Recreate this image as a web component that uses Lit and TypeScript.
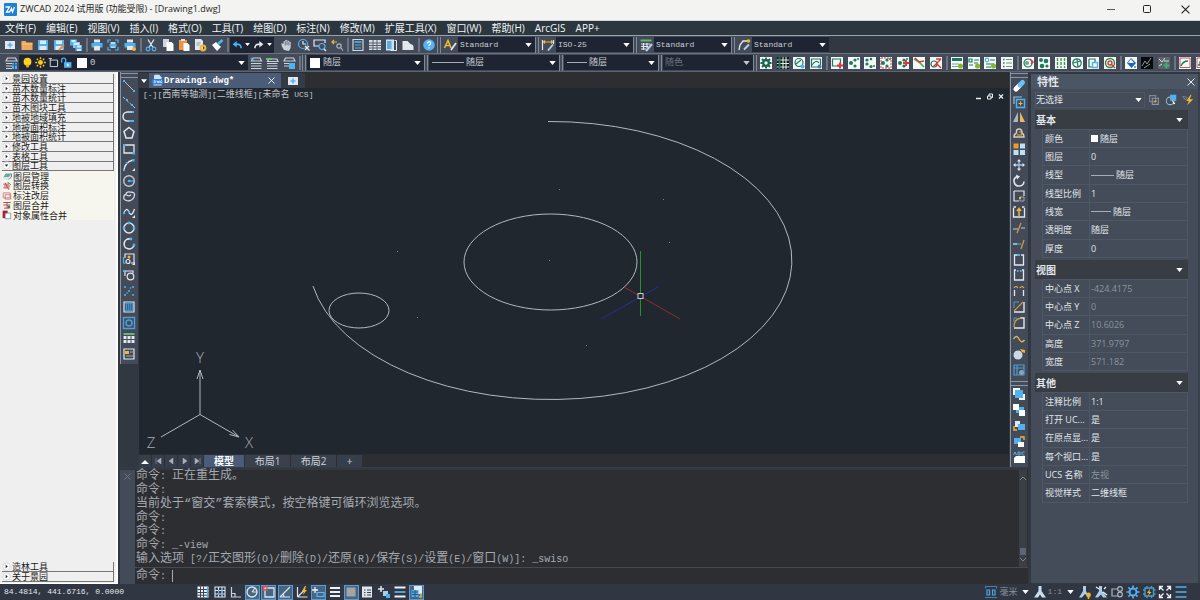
import { LitElement, html, css, svg, nothing, TemplateResult } from "lit";
import { customElement, state } from "lit/decorators.js";
import { classMap } from "lit/directives/class-map.js";

const W = "#e3e7ee";
const B = "#4fb3f2";
const Y = "#f2b632";
const G = "#1f7a5c";
const R = "#d83a3a";

/* ---------- drawing helpers for the 16x16 glyphs ---------- */
const ln = (d: string, c = W, w = 1.2) =>
  svg`<path d=${d} fill="none" stroke=${c} stroke-width=${w} />`;
const fl = (d: string, c = W) => svg`<path d=${d} fill=${c} />`;
const bx = (x: number, y: number, w: number, h: number, c = W) =>
  svg`<rect x=${x} y=${y} width=${w} height=${h} fill=${c} />`;
const dot = (x: number, y: number, r: number, c = B) =>
  svg`<circle cx=${x} cy=${y} r=${r} fill=${c} />`;
const ring = (x: number, y: number, r: number, c = W, w = 1.2) =>
  svg`<circle cx=${x} cy=${y} r=${r} fill="none" stroke=${c} stroke-width=${w} />`;
const tile = (inner: unknown, bg = "#f4f8f6") => svg`${bx(2, 2, 12, 12, bg)}${inner}`;
const tree = (c = G) => svg`${dot(5, 8, 2, c)}${dot(9, 5, 1.6, c)}${dot(9, 11, 1.6, c)}${dot(12, 4, 1, c)}`;
const plus = (x: number, y: number, c = R) => ln(`M${x - 3} ${y}h6M${x} ${y - 3}v6`, c, 2);

const ICONS: Record<string, unknown> = {
  newf: svg`${bx(3, 4, 10, 8)}${ln("M8 5.500v5M5.500 8h5", B, 1.6)}`,
  open: svg`${fl("M2.500 4h4l1 1.500h6V13h-11z", "#f0a95c")}${bx(2.5, 6.5, 11, 1, "#f7c489")}`,
  save: svg`${fl("M3 3h10v10H3z", B)}${bx(5, 3.5, 6, 3.5)}${bx(4.5, 9, 7, 4)}`,
  saveas: svg`${fl("M3 3h10v10H3z", B)}${bx(5, 3.5, 6, 3.5)}${bx(4.5, 9, 7, 4)}${ln("M8 13l5-5", "#f0863c", 2)}`,
  saveall: svg`${bx(2, 2.5, 7, 6, B)}${bx(3.5, 3, 4, 2)}${bx(5, 5, 7, 6, "#86c8f5")}${bx(6, 6, 5, 2)}${bx(7.5, 8, 6.5, 6, B)}${bx(9, 8.5, 4, 2)}${bx(9, 12, 4, 2)}`,
  print: svg`${bx(5, 2.5, 6, 3)}${bx(2.5, 6, 11, 4.5, B)}${bx(5, 9, 6, 4.5)}`,
  preview: svg`${ln("M3 6V3h3M10 3h3v3M13 10v3h-3M6 13H3v-3", B)}${bx(5.5, 5, 5, 6, "#bcd9ee")}${bx(4.5, 7, 7, 2.5, B)}`,
  plot: svg`${bx(5, 2.5, 6, 3)}${bx(2.5, 6, 11, 4.5, B)}${bx(5, 9, 6, 4)}${dot(12, 12, 2, Y)}`,
  cut: svg`${ln("M5 2.500l5 8M11 2.500l-5 8", W, 1.3)}${ring(5, 12, 1.8, B)}${ring(11, 12, 1.8, B)}`,
  copy: svg`${fl("M3 2h6v8H3z", "#cfd5de")}${fl("M6.500 5h5l2 2v7h-7z", "#fff")}`,
  paste: svg`${bx(3, 3, 8, 10, "#ea9547")}${bx(5, 2, 4, 2)}${fl("M7.500 6h4l2 2v6h-6z", "#fff")}`,
  match: svg`${fl("M3 2h6l2 2v9H3z")}${ln("M4.500 6h4M4.500 8h3", "#8893a3", 1)}${ring(11, 11, 2.4, Y, 2)}`,
  brush: svg`${fl("M3 8l4-3 5 5-4 4z", "#fff")}${ln("M9 7l4.500-4", B, 2.6)}`,
  undo: svg`${ln("M12.500 12q0-6-8-5", B, 2)}${fl("M2 7l5-4v8z", B)}`,
  redo: svg`${ln("M3.500 12q0-6 8-5", W, 2)}${fl("M14 7L9 3v8z")}`,
  hand: svg`${fl("M5 13q-3-4-2.500-7l2 1V4.500q1-1 1.800 0V3.200q1-1 1.800 0v.8q1-1 1.800 0v1q1-.8 1.800 0v5q0 2-2 4z", "#c9cfd8")}${ln("M6.300 4.500v4M8.100 4v4M9.900 5v3.500", "#434b59", .7)}`,
  zoomrt: svg`${ring(7, 7, 4.5, B)}${ln("M7 4v3h3", W)}${ln("M9 9l4.500 4.500", W, 1.3)}${ln("M9 13l4-4")}`,
  zoomw: svg`${ln("M13 6V3H2v6h5", W)}${ring(10, 9.5, 3, B)}${ln("M12 12l2 2", W, 1.5)}`,
  zoomp: svg`${ln("M3 5h5M5 3L3 5l2 2", Y)}${ring(10, 9, 2.2, "#aeb6c2")}${ln("M12 11l2 2.500", "#aeb6c2")}`,
  calc: svg`${ln("M3 2.500h10v11H3z", "#c9d8e6")}${ln("M4.500 5h7", B, 1.6)}${ln("M5 8h6M5 11h6", B)}`,
  sheet: svg`${bx(2, 3, 12, 10, "#d7dce4")}${ln("M2 6h12M2 8.500h12M2 11h12M6 3v10M10 3v10", "#56606f", 1)}`,
  pal: svg`${bx(3, 2.5, 8, 11, "#cfe2f1")}${bx(4, 4, 4.5, 8, "#59aee2")}${ln("M11.500 3.500h2v10h-6", W, 1)}`,
  cloud: svg`${fl("M2.500 4h5l3 3q3 .5 3 3v3h-11z")}`,
  help: svg`${dot(8, 8, 5.8, "#54b2f5")}${ln("M6.300 6.500q.2-1.800 1.800-1.800 1.700.1 1.600 1.600 0 1-1.600 1.800v.9M8 10.300v1.300", "#fff", 1.2)}`,
  txt: svg`${ln("M2.500 11L6 3.500 9 11M4 8.500h4", Y, 1.6)}${ln("M9 13l5-7", W, 1.8)}`,
  dim: svg`${ln("M2.500 3v10M13.500 3v4", W)}${ln("M3 5h10M5 3.500L3.500 5 5 6.500M11 3.500L12.500 5 11 6.500", Y)}${ln("M8 13.500l5-6", "#b9d2ea", 1.8)}`,
  tbl: svg`${bx(2.5, 2.5, 11, 2, "#67b477")}${ln("M3 7h9M3 9.500h7M3 12h5M5.500 6v7M9 6v5", W)}${ln("M8 14l6-7", "#b9d2ea", 2)}`,
  mld: svg`${ln("M3 13l1-5 3-4h5", W, 1.3)}${ln("M8 12.500l5-5", "#b9d2ea", 2)}${dot(12.5, 4, 1.8, Y)}`,
  layers: svg`${ln("M4.500 3h8l1.500 3H3zM3 8.500h6M3 11h6M3 13.500h6", "#cdd3dc")}${bx(9, 8, 5, 6, B)}${ln("M9 10h5M11.500 8v6", "#2a5d86", 1)}`,
  bulb: svg`${dot(8, 7, 4.8, "#ffd21f")}${bx(6.3, 10.5, 3.4, 3.5, "#e0b41c")}`,
  sun: svg`${dot(8, 8, 3, "#ffc81e")}${ln("M8 1.500v2.500M8 12v2.500M1.500 8H4M12 8h2.500M3.500 3.500l1.500 1.500M11 11l1.500 1.500M12.500 3.500L11 5M5 11l-1.500 1.500", "#ffc81e", 1.8)}`,
  vp: svg`${ln("M4 5h9v8H4zM2 3h4M4 3v3", "#cdd3dc")}`,
  lock: svg`${ln("M2 8V5q0-2.500 2.500-2.500T7 5v3", B, 1.6)}${bx(5, 7.5, 9, 7, B)}${bx(8.5, 9.5, 2, 3, "#fff")}`,
  lay1: svg`${ln("M5 3h7l1.500 3h-10zM3 8.500h10.500M3 11h10.500M3 13.500h10.500", "#cdd3dc")}${ln("M3 3l3 3", B, 1.5)}`,
  lay2: svg`${ln("M5 4h8l1 2.500H3.500zM3 8.500h10.500M3 11h10.500M3 13.500h10.500", "#cdd3dc")}${ln("M2 4h6", "#6fc46c", 1.8)}`,
  lay3: svg`${ln("M4.500 3h8l1.500 3H3zM3 8.500h6M3 11h6", "#cdd3dc")}${bx(8, 8, 6, 6, B)}`,
  gear: tile(svg`${ring(8, 8, 2.8, "#14634a", 2.2)}${ln("M8 2.500v2M8 11.500v2M2.500 8h2M11.500 8h2M4 4l1.500 1.500M10.500 10.500L12 12M12 4l-1.500 1.500M5.500 10.500L4 12", "#14634a", 1.8)}`),
  grid: svg`${bx(2, 2, 12, 12, "#0e1a18")}${ln("M2 5h12M2 8.500h12M2 12h12M8 2v12M11 2v12", "#dfe9e4", 1.1)}${ln("M4.500 2v12", G, 2)}`,
  g1: tile(svg`${ring(8, 7.5, 4, G)}${ln("M5 9l5-4", G)}${dot(11.5, 11.5, 2, B)}`),
  g2: tile(svg`${ln("M3.500 4h9v8h-9z", G)}${ln("M4 10q4-6 7-2", G)}${dot(11.5, 11.5, 2, "#3f83bb")}`),
  a1: tile(svg`${ln("M3.500 4h8v7h-8z", G)}${plus(11, 10.5)}`),
  a2: tile(tree()),
  a3: tile(svg`${dot(5, 5, 1.6, G)}${dot(5, 9, 1.6, G)}${dot(9, 11.5, 1.6, G)}${dot(12, 11, 1, G)}${dot(9, 4, 1.3, G)}`),
  a4: tile(svg`<rect x="3" y="3" width="10" height="10" fill="none" stroke=${R} stroke-dasharray="2 1" />${tree()}`),
  a5: tile(svg`${tree()}${plus(11, 8)}`),
  a6: tile(svg`${ln("M3 4l5 3 5 5", "#47b04a", 1.6)}${ln("M4 3l4 4 5-1", R, 1.6)}`),
  a7: tile(svg`${ring(6, 9, 3, G)}${ln("M8 4h5M5 12l8-8M9 9l4 4", R, 1.4)}`),
  t1: tile(svg`${bx(3, 3, 10, 3, G)}${ln("M3 9h7M3 11.500h6", "#7ba493", 1)}${dot(11.5, 11, 2.5, "#84b52c")}`),
  t2: tile(svg`${ln("M3 4h3v3H3zM8 5h5M8 8h4M3 10h4", G)}${dot(11.5, 11, 2.5, "#84b52c")}`),
  t3: tile(svg`${ring(5, 5, 1.8, B)}${ln("M8 5h5M4 9h8M4 12h5", G)}${dot(11.5, 11, 2.5, "#84b52c")}`),
  t4: tile(svg`${ln("M4 4.500h1.500M4 8h1.500M4 11.500h1.500", G, 1.5)}${ln("M7 4.500h6M7 8h6M7 11.500h6", "#6b9d8a", 1.2)}`),
  c1: tile(svg`${ring(8, 8, 4, G)}${dot(7, 8, 2, "#6aa58e")}${ln("M10 4l3 3-2 2", R, 1.5)}`),
  c2: tile(svg`${dot(5, 5, 2, G)}${dot(10, 6, 2.3, G)}${dot(6, 11, 2.3, G)}${dot(11, 11, 1.6, G)}`),
  c3: tile(svg`<path d="M4.500 3v10M8 3v10M11.500 3v10" stroke="#3f9b4c" stroke-width="1.4" stroke-dasharray="3 1" />`),
  c4: tile(svg`${ring(8, 8, 4.2, G)}${ln("M4 8l8-2M8 4l1 8", G)}`),
  c5: tile(svg`${ln("M4 4h6v3M4 4v8h3", G)}${ln("M7.500 7.500h5v5h-5z", B, 1.4)}`),
  c6: tile(svg`${ring(8, 8, 4.5, "#278a3f", 1.4)}${ring(8, 8, 2, R, 1.4)}${ln("M9 9l4 4", R, 1.5)}`),
  d1: tile(svg`${fl("M4 8l4-5 5 5-4.500 5z", "#1e65b5")}${fl("M5 8l3-4 3 4z", "#f6f6f6")}${bx(11, 11, 2, 2, B)}`),
  d2: svg`${bx(2, 2, 12, 12, "#07090b")}${ln("M3 11l3-5 2 3 4-6M5 13l6-4", "#8f989c", 1)}`,
  d3: svg`${bx(2, 2, 12, 12, "#5b6467")}${ln("M3 4l3 3 3-4M3 11l3-2M8 6h5", "#d8dedf", 1)}${plus(10.5, 10.5, "#3cae7a")}`,
  e1: tile(svg`${ln("M3 3h10v9.500H3z", "#bd4b4b", .9)}${ln("M4 11q2-5 7-5", G, 1.4)}`),
  e2: tile(svg`${ln("M3 3h10v9.500H3z", "#bd4b4b", .9)}${ln("M4 10h2v-3h3v3h3", G, 1.4)}`),
  /* draw tools */
  line: svg`${ln("M3 3l10 10", "#b9c3d0", 1)}${bx(2, 2, 2, 2, B)}${bx(12, 12, 2, 2, B)}`,
  xline: svg`<path d="M2 3l12 11" stroke="#b9c3d0" stroke-dasharray="3 1.500" />${bx(5, 5, 2, 2, B)}${bx(10, 10, 2, 2, B)}`,
  pline: svg`${ln("M12 3H6.500a4 4 0 0 0 0 9H10", W, 1.5)}${bx(11, 2, 2, 2, B)}${ln("M8 12h5", B, 2)}`,
  poly: ln("M8 2.500l5 4-2 6.500H5L3 6.500z", W, 1.5),
  rect: svg`${ln("M3 4h10v8H3z", W, 1.3)}${bx(2, 3, 2.5, 2.5, B)}${bx(11.5, 11, 2.5, 2.5, B)}`,
  arc: svg`${ln("M3 13Q4 5 12 3", W, 1.4)}${bx(11, 2, 2.5, 2.5, B)}${bx(5, 5, 2, 2, B)}${bx(2, 12, 2, 2, B)}${fl("M14 14h-3l3-3z")}`,
  circ: svg`${ring(8, 8, 5.3, "#c3cad4", 1.4)}${ln("M8 8h5", B, 1.4)}${dot(8, 8, 1.3)}`,
  rev: ln("M3 11q-1-4 2-4.500 0-3 4-2.500 5 0 4.500 3-.5 4-4 5.500-5 1-6.500-1.500zM5.500 7q3 2 4.500-.5", "#d5dae2", 1.3),
  spl: svg`${ln("M2.500 10q3-8 5.500-2t5.500-3", W, 1.3)}${dot(3, 9, 1.2)}${dot(8, 8, 1.2)}${fl("M14 14h-3l3-3z")}`,
  ell: svg`${ring(8, 8, 5, W, 1.5)}${dot(8, 3, 1.4)}${dot(3, 8, 1.4)}${dot(13, 8, 1.4)}`,
  earc: svg`${ln("M9 3a5 5 0 1 0 4 6", W, 1.6)}${dot(10, 3, 1.4)}${dot(13, 9, 1.4)}`,
  ins: svg`${ln("M4 7V3h9v9h-3", W)}${ln("M2.500 6v6h3", B)}${ring(7, 10.5, 2, W)}${dot(8, 6, 1.5, Y)}${fl("M14 14h-3l3-3z")}`,
  blk: svg`${ln("M4 9V4h8v2M4 4H2", W)}${ring(9.5, 9.5, 3.3, W)}${bx(2, 3, 2, 2, B)}`,
  pts: svg`${dot(4, 4, 1)}${dot(12, 4, 1)}${dot(8, 8, 1)}${dot(4, 12, 1)}${dot(12, 12, 1)}${dot(9.5, 5, .8)}${dot(6, 10, .8)}`,
  hat: svg`${bx(4, 4, 8, 8, "#3f8ecb")}${ln("M3 3h10v10H3z", W, 1.2)}<path d="M4 6h8M4 8h8M4 10h8" stroke="#20415c" stroke-dasharray="1 1" />`,
  reg: svg`${ln("M2.500 2.500h11v11h-11z", "#4c9fdc", 1.4)}${ring(8, 8, 3, "#4c9fdc", 1.5)}`,
  tab: svg`${bx(2.5, 3, 11, 2, "#67b477")}${bx(2.5, 6, 3, 3)}${bx(6.5, 6, 3, 3)}${bx(10.5, 6, 3, 3)}${bx(2.5, 10, 3, 3)}${bx(6.5, 10, 3, 3)}${bx(10.5, 10, 3, 3)}`,
  mtx: svg`${ln("M3 3h10v10H3z", W)}${bx(4, 5, 4, 3, Y)}${ln("M9 6h3M5 10h7", "#9aa4b2", 1)}`,
  /* modify tools */
  erase: svg`<path d="M5 11l3-3" fill="none" stroke="#fff" stroke-width="5" stroke-linecap="round" /><path d="M9 7l2.500-2.500" fill="none" stroke="#6cc0f6" stroke-width="5" stroke-linecap="round" />`,
  cpy: svg`${ln("M3 10V3h8", "#8fc3ea")}${ln("M5.500 5.500h8v8h-8z", B, 1.4)}${ln("M9.500 7.500v4M7.500 9.500h4", Y)}`,
  mir: svg`${fl("M7 3v10H2z", "#aeb6c2")}${fl("M9 3v10h5z", "#efb85a")}`,
  off: svg`${ln("M3 12h10q0-3-2-4 0-4-3-4T5.500 8Q3 9 3 12z", "#d9cdb8", 1.5)}${ln("M6 10h5V7H8", "#efb85a", 1)}`,
  arr: svg`${bx(2.5, 2.5, 5, 5, "#f39a25")}${bx(9, 2.5, 5, 5, "#bfe0f8")}${bx(2.5, 9, 5, 5, "#bfe0f8")}${bx(9, 9, 5, 5, "#bfe0f8")}`,
  mov: svg`${ln("M8 3v10M3 8h10", "#9fc6e6", 1.3)}${fl("M8 2l2 2.500H6zM8 14l-2-2.500h4zM2 8l2.500-2v4zM14 8l-2.500 2V6z")}`,
  rot: svg`${ln("M6 3.500a5 5 0 1 0 7 5", W, 1.5)}${fl("M5 1.500l4 2-3 3z")}`,
  scl: svg`${ln("M3 3h10v5M3 3v10h5", W, 1.2)}${ln("M9 9h4v4H9z", "#9aa4b2", 1)}${bx(8, 9, 2, 2, Y)}`,
  str: svg`${ln("M2.500 4v9h11V4M5 3h-2.500M13.500 3H11", W, 1.3)}${ln("M8 12V5M6 7l2-2.500L10 7", Y, 1.5)}`,
  trm: svg`${ln("M2 9h5M10 8h4", "#8fa2b5", 1.3)}${ln("M6 13l4-10", "#d19a3e", 1.3)}`,
  ext: svg`${ln("M2 8h8", "#4b9ed4", 1.2)}${ln("M10 13l3-9", "#d19a3e", 1.3)}${ln("M2 8h4", "#ccd2da", 1.2)}`,
  brk: svg`${ln("M6 3H3.500v10h9V3H10", W, 1.3)}${bx(6, 2, 3, 2, B)}`,
  brk2: svg`${ln("M5 3H3.500v10h9V3H11", W, 1.3)}${bx(6, 3, 1.5, 2, B)}${bx(9, 3, 1.5, 2, B)}`,
  joi: svg`${ln("M3.500 13V7M12.500 13V7", W, 1.3)}${ln("M3 5q2-3 4 0M9 5q2-3 4 0", Y, 1.2)}`,
  cha: svg`${ln("M3 13h10V3", W, 1.4)}${ln("M3 12L12 3", "#d19a3e", 1.2)}${ln("M3 9V3h5", "#4b9ed4", 1)}`,
  fil: svg`${ln("M3 13h10V3H9", W, 1.4)}${ln("M3 12q0-8 7-9", "#d19a3e", 1.3)}${ln("M3 7V3h3", "#4b9ed4", 1)}`,
  bld: ln("M2.500 8q3-5 5.500 0t5.500 1", "#dcb65e", 1.4),
  exp: svg`${dot(7, 9, 4.5, "#ccd6e4")}${fl("M9 3l5 1v3l-3-1z", "#f0b23a")}`,
  alg: svg`${ln("M3 3h10v10H3zM6 3v10M3 6h10", "#4b9ed4", 1.2)}${dot(10.5, 10.5, 2.5, "#8fa2b5")}`,
  front: svg`${bx(2, 2, 7, 7, "#f4f7fa")}${bx(8, 8, 6, 6, "#f4f7fa")}${bx(4, 4, 8, 8, "#52b0f0")}`,
  back: svg`${bx(5, 5, 8, 6, "#52b0f0")}${bx(2, 2, 6, 6, "#fff")}${bx(8, 8, 6, 6, "#fff")}`,
  abv: svg`${bx(4, 3, 5, 6)}${bx(7, 6, 7, 6, "#52b0f0")}${ln("M3 8v4h3", Y, 1.4)}`,
  blw: svg`${bx(3, 4, 7, 6, "#52b0f0")}${bx(7, 8, 6, 5, "#fff")}${ln("M9 3h4v3", Y, 1.4)}`,
  abc: svg`${ln("M2.500 5l1.500-3 1.500 3M7 2h2v3H7zM11.500 5h2M11.500 2h2M11 2v3", "#5db4ee", 1)}${fl("M3 8l2-2h9v7H3z", "#fff")}`,
  bot: svg`${fl("M3 3l2 3 3-2 3 2 2-3v7H3z", "#4b9ed4")}`,
  /* palette */
  pk1: svg`${ln("M3 3h7v7H3z", "#7f8894")}${ln("M6 6h7v7H6z", "#8f98a4")}${ln("M9.500 8v3M8 9.500h3", Y, 1)}`,
  pk2: svg`${ring(7, 9, 4.3, "#9fb4c8")}${bx(7, 2, 7, 7, "#52b0f0")}${fl("M9 8l4 4-2 1z", "#fff")}`,
  pk3: svg`${ln("M2 4l3 4 2-3z", "#7f8894", 1)}${fl("M11 2L6 9h3l-2 5 7-7h-4l2-5z", Y)}`,
  /* status */
  s1: svg`${bx(2.5, 2.5, 11, 11, "#eef2f6")}${ln("M5.500 2.500v11M8.500 2.500v11M2.500 5.500h11M2.500 8.500h11M2.500 11.200h11", "#3a4552", 1)}${ln("M12.500 3v11", "#52b0f0", 1.3)}`,
  s2: svg`${ln("M3 3h10v10H3zM6.500 3v10M10 3v10M3 6.500h10M3 10h10", "#dfe6ee", 1.1)}${ln("M6.500 6v5M10 6v5", "#52b0f0", 1.3)}`,
  s3: ln("M3.500 3v10H13M3.500 9.500h3.500V13", "#c9d0d9", 1.2),
  s4: svg`${ring(8, 8, 5, "#dfe6ee", 1.3)}${ln("M8 8l3-4M8 8h5", "#dfe6ee", 1.2)}`,
  s5: svg`${ln("M4 4h9v9H4z", "#dfe6ee", 1.3)}${ln("M2.500 2.500h3.500V6H2.500z", "#e25050", 1.3)}`,
  s6: ln("M3 13L13 3M3 13h10M7 13q0-2-1.500-3", "#dfe6ee", 1.2),
  s7: svg`${ln("M3.500 3v10M3.500 13h10M3.500 13l7-7", "#dfe6ee", 1.2)}${fl("M11 2l-3 5h2l-1 4 4-5h-2l1-4z", Y)}`,
  s8: svg`${ln("M5 3v6M2 6h6", "#eef2f6", 1.3)}${ln("M7 8.500h7v4H7z", "#5db4ee", 1.2)}`,
  s9: ln("M3 4h10M3 8h10M3 12h10", "#eef2f6", 1.8),
  s10: bx(3.5, 3.5, 9, 9, "#a4a4a4"),
  s11: svg`${bx(3, 2.5, 10, 11, "#dfe6ee")}${ln("M5 6h1.500M5 8.500h1.500M5 11h1.500M8 6h4M8 8.500h4M8 11h4", "#38424f", 1.2)}`,
  s12: svg`${ln("M5 2v6M2 5h6", "#dfe6ee", 1.5)}${bx(7, 7, 5, 5, "#9fd0f5")}${bx(10, 10, 4, 4, "#52b0f0")}`,
  s13: svg`${ln("M2.500 3.500h11M2.500 12.500h11", "#eef2f6", 1.8)}${ln("M2.500 8h11", "#52b0f0", 1.8)}`,
  s14: svg`${bx(5, 2, 8, 8, "#dfeaf4")}${bx(2.5, 6, 7, 7, "#52b0f0")}${ln("M3 8h6M3 10.500h6M6 6v7", "#205a87", 1)}${ln("M12 9v4h-2", Y, 1.5)}`,
  units: svg`${ln("M2 2.500h12M2 13.500h12M2.500 2v2.500M13.500 2v2.500", "#3f82b8", 1)}${ln("M4 6h2.500v5H4zM9.500 6H12v5H9.500z", "#52a5e0", 1.2)}`,
  ann: svg`${fl("M6.500 2h3v5l4.500 6.500h-4L8 10.500 6 13.500H2L6.500 7z", "#c7dff2")}`,
  ann2: svg`${fl("M6 2h3v5l3 6-4-3-3 3.500H2L6 7z", "#a9cdea")}${dot(11.5, 11, 2.4, Y)}${bx(10.7, 12, 1.6, 3, Y)}`,
  ann3: svg`${fl("M6 2h3v5l5 6.500h-4L8 10.500 5 13.500H2L6 7z", "#a9cdea")}${ln("M3 3l3 2M13 3l-2 2M10 8l4 3", "#eef2f6", 1.2)}`,
  iso: svg`${ln("M9 5H3v7h6", "#aeb6c2", 1.2)}${ring(11, 5, 2.3, "#aeb6c2")}${ring(11, 10.5, 2.3, "#aeb6c2")}`,
  cog: svg`${ring(8, 8, 3.5, "#52b0f0", 2)}${ln("M8 1.500v2.500M8 12v2.500M1.500 8H4M12 8h2.500M3.400 3.400L5 5M11 11l1.600 1.600M12.600 3.400L11 5M5 11l-1.600 1.600", "#52b0f0", 1.7)}`,
  chip: svg`${ln("M4 4h8.500v8H4zM6 2v2M10.500 2v2M6 12v2M10.500 12v2M2 6h2M2 10h2M12.500 6h2M12.500 10h2", "#4b9ed4", 1.3)}${fl("M9 4.500L6 9h2l-1 3 3.500-4h-2z", Y)}`,
  full: svg`${ln("M2.500 6V2.500H6M10 2.500h3.500V6M13.500 10v3.500H10M6 13.500H2.500V10M3 3l3.500 3.500M13 3L9.500 6.500M13 13L9.500 9.500M3 13l3.500-3.500", "#eef2f6", 1.3)}`,
  menu: ln("M2.500 3h11M2.500 8h11M2.500 13h11", "#52b0f0", 1.6),
  /* catalogue entries */
  l1: svg`${fl("M2 10l4-6h9l-4 6z", "#6aa7a0")}${fl("M2 10h9v4H2z", "#d4e6ec")}${ln("M11 13.500l4-4V4.500", "#2b6cab", 1.5)}`,
  l2: svg`${ln("M2 5h9M3 8h10M2 11h10M5 3l6 11", "#c04a50", 1.6)}${ln("M9 2l5 4", "#32806a", 1.6)}`,
  l3: svg`${ln("M2 3h11v8H2zM5 6h9v7H5z", "#cf7378", 1.4)}`,
  l4: svg`${ln("M2 4h12M2 8h11M8 3v10M3 13h9", "#c04a50", 1.6)}${bx(9, 9, 4, 4, "#32806a")}`,
  l5: svg`${bx(1, 1, 8, 12, "#a81f33")}${bx(5, 5, 10, 9, "#fff")}${ln("M5 5h9v9H5z", "#5b6672", 1)}`,
};

const glyph = (name: string) =>
  html`<svg class="glyph" viewBox="0 0 16 16" aria-hidden="true">${ICONS[name]}</svg>`;

const iconBtn = (name: string, on = false) =>
  html`<button class=${classMap({ ib: true, on })} type="button" aria-label=${name}>${glyph(name)}</button>`;

const STEP = 16.4;
const group = (names: string[]) => html`
  <div class="group" style="width:${Math.round(names.length * STEP)}px">${names.map((n) => iconBtn(n))}</div>
`;
const sep = html`<span class="sep"></span>`;
const grip = html`<span class="grip"></span>`;
const caret = html`<svg class="caret" viewBox="0 0 8 5" aria-hidden="true"><path d="M0 0h8L4 5z" fill="currentColor" /></svg>`;

const combo = (cls: string, label: string, value: string, lead: unknown = nothing) => html`
  <label class="combo ${cls}">
    ${lead}
    <select aria-label=${label}><option>${value}</option></select>
    ${caret}
  </label>
`;

/* Full-width and half-width runs are set at two sizes to keep a 2:1 grid. */
const grid2 = (text: string): TemplateResult[] =>
  text.split(/([\x20-\x7e]+)/).filter(Boolean).map((run) =>
    /^[\x20-\x7e]/.test(run) ? html`<span class="half">${run}</span>` : html`<span>${run}</span>`);

const MENUS = ["文件(F)", "编辑(E)", "视图(V)", "插入(I)", "格式(O)", "工具(T)", "绘图(D)", "标注(N)",
  "修改(M)", "扩展工具(X)", "窗口(W)", "帮助(H)", "ArcGIS", "APP+"];
const TREE = ["景园设置", "苗木数量标注", "苗木数量统计", "苗木图块工具", "地被地域填充", "地被面积标注",
  "地被面积统计", "修改工具", "表格工具", "图层工具"];
const LEAVES: [string, string][] = [["l1", "图层管理"], ["l2", "图层转换"], ["l3", "标注改层"],
  ["l4", "图层合并"], ["l5", "对象属性合并"]];
const DRAW = ["line", "xline", "pline", "poly", "rect", "arc", "circ", "rev", "spl", "ell", "earc", "ins",
  "blk", "pts", "hat", "reg", "tab", "mtx"];
const MODIFY = ["erase", "cpy", "mir", "off", "arr", "mov", "rot", "scl", "str", "trm", "ext", "brk", "brk2",
  "joi", "cha", "fil", "bld", "exp", "alg"];
const ORDER = ["front", "back", "abv", "blw", "abc"];
const HISTORY = ["命令: 正在重生成。", "命令:", "当前处于“窗交”套索模式，按空格键可循环浏览选项。", "命令:", "命令:",
  "命令: _-view", "输入选项 [?/正交图形(O)/删除(D)/还原(R)/保存(S)/设置(E)/窗口(W)]: _swiso"];

type Prop = { k: string; v: string; dim?: boolean; swatch?: boolean; rule?: number };
const SECTIONS: { title: string; rows: Prop[] }[] = [
  { title: "基本", rows: [
    { k: "颜色", v: "随层", swatch: true }, { k: "图层", v: "0" }, { k: "线型", v: "随层", rule: 23 },
    { k: "线型比例", v: "1" }, { k: "线宽", v: "随层", rule: 20 }, { k: "透明度", v: "随层" }, { k: "厚度", v: "0" }] },
  { title: "视图", rows: [
    { k: "中心点 X", v: "-424.4175", dim: true }, { k: "中心点 Y", v: "0", dim: true },
    { k: "中心点 Z", v: "10.6026", dim: true }, { k: "高度", v: "371.9797", dim: true },
    { k: "宽度", v: "571.182", dim: true }] },
  { title: "其他", rows: [
    { k: "注释比例", v: "1:1" }, { k: "打开 UC...", v: "是" }, { k: "在原点显...", v: "是" },
    { k: "每个视口...", v: "是" }, { k: "UCS 名称", v: "左视", dim: true }, { k: "视觉样式", v: "二维线框" }] },
];
const POINTS = [[559, 189], [663, 199], [669, 242], [549, 260], [397, 251], [417, 317], [586, 345]];

@customElement("app-root")
export class AppRoot extends LitElement {
  @state() private layout = "模型";

  static styles = css`
    :host {
      display: flex; flex-direction: column; height: 100vh; overflow: hidden;
      background: #323842; color: #e2e6ec;
      font: 10px/14px "Open Sans", "Noto Sans CJK SC", sans-serif;
    }
    * { box-sizing: border-box; }
    button, select, input { font: inherit; color: inherit; background: none; border: 0; padding: 0; margin: 0; }
    button { display: flex; align-items: center; justify-content: center; }
    select { appearance: none; outline: none; min-width: 0; flex: 1; text-overflow: clip; }
    .glyph { display: block; width: 16px; height: 16px; flex: none; }
    .caret { width: 7px; height: 4px; flex: none; color: #fff; }
    .grow { flex: 1; }

    .title { display: flex; align-items: center; height: 21px; flex: none; padding: 0 10px 2px 4px; gap: 3px;
      background: #f3f3f1; color: #1e1e1e; border-bottom: 1px solid #cfd3d4; font-size: 9px; }
    .title h1 { margin: 0; font: inherit; flex: 1; }
    .title .wb { width: 33px; justify-content: center; }
    .title .wb:last-child { width: 24px; justify-content: flex-end; }
    .menu { display: flex; align-items: center; height: 15px; flex: none; padding-left: 5px; gap: 10px;
      background: #2b363e; border-bottom: 1px solid #9aa2aa; }
    .menu button { white-space: nowrap; color: #f2f4f6; }

    .bar { display: flex; align-items: center; height: 18px; flex: none; overflow: hidden; }
    .bar .run { display: flex; align-items: center; height: 100%; background: #434b59; border-bottom: 1px solid #5b6472; flex: none; }
    .bar1 { border-bottom: 1px solid #6b7480; }
    .bar1 .run { padding-left: 2px; border-bottom: 0; }
    .bar2 .run { padding-left: 3px; flex: 1 0 auto; }
    .group { display: grid; grid-auto-flow: column; grid-auto-columns: 1fr; justify-items: center; flex: none; }
    .ib { width: 16px; height: 16px; }
    .sep { width: 5px; height: 14px; flex: none; display: flex; justify-content: center; }
    .sep::before { content: ""; width: 2px; background: #6a7483; }
    .grip { width: 4px; height: 16px; flex: none; border-left: 1px solid #7f8998; border-right: 1px solid #7f8998; margin-right: 1px; }
    .history { display: flex; align-items: center; justify-content: space-between; width: 44px; height: 16px; padding-right: 2px; background: #1e2431; margin-right: 5px; }
    .history .ib { width: 14px; }
    .history .glyph { width: 13px; }
    .history .caret { width: 5px; height: 3px; }
    .combo { display: flex; align-items: center; height: 15px; background: #1e2431; flex: none; padding: 0 3px 0 2px; gap: 2px;
      font: 9px/14px "Liberation Mono", "Noto Sans CJK SC", monospace; color: #c9ced6; }
    .style { width: 77px; font-size: 8px; }
    .layer { width: 229px; gap: 0; }
    .layer .glyph { width: 13px; height: 13px; }
    .layer .swatch { margin-left: 4px; }
    .layer select { margin-left: 2px; }
    .color { width: 117px; }
    .ltype { width: 130px; }
    .lweight { width: 94px; }
    .pstyle { width: 90px; color: #6d7480; }
    .pstyle .caret { color: #c4c8ce; }
    .swatch { width: 10px; height: 10px; background: #fff; flex: none; margin: 0 1px; }
    .rule { height: 1px; background: #a7adb6; flex: none; margin-left: 1px; }

    .main { display: flex; flex: 1; min-height: 0; }
    .catalog { width: 118px; flex: none; display: flex; flex-direction: column; justify-content: space-between;
      background: #efefef; color: #1a1a1a; border-right: 2px solid #fff; border-bottom: 1px solid #fff; padding: 2px 2px 1px; font-size: 9px; line-height: 9px; }
    .list { display: grid; grid-auto-rows: minmax(0, 1fr); height: 146px; }
    .list.foot { height: 20px; }
    .list button { justify-content: flex-start; gap: 1px; white-space: nowrap; }
    .list .head { border-bottom: 1px solid #777; border-right: 1px solid #777; }
    .list .head svg { width: 9px; height: 9px; flex: none; }
    .list .leaf { background: #f6f5ee; gap: 1px; }
    .list .leaf .glyph { width: 10px; height: 10px; }
    .center { flex: 1; min-width: 0; display: flex; flex-direction: column; padding: 0 3px 0 2px; }
    .work { flex: 1; min-height: 0; display: flex; }
    .side { width: 18px; flex: none; display: flex; flex-direction: column; overflow: hidden; }
    .pad { background: #434b59; border-left: 1px solid #8a94a3; flex: none; padding-bottom: 2px; display: flex; flex-direction: column; align-items: flex-start; }
    .pad::before { content: ""; height: 3px; width: 100%; border-top: 1px solid #8a94a3; border-bottom: 1px solid #8a94a3; margin-top: 1px; }
    .stack { display: grid; grid-auto-rows: minmax(0, 1fr); align-items: center; }
    .draw .stack { height: 284px; }
    .mod .stack { height: 300px; }
    .mod .order { height: 80px; }
    .doc { flex: 1; min-width: 0; margin: 0 1px; display: flex; flex-direction: column; background: #2c2e32; }
    .files { display: flex; height: 16px; flex: none; padding-top: 1px; align-items: stretch; background: #2c2e32; }
    .files .drop { width: 10px; background: #343b47; }
    .files .drop .caret { width: 6px; height: 6px; }
    .files .file { display: flex; align-items: center; width: 132px; background: #4b5c78; padding: 0 6px 0 2px; gap: 0; color: #fff; font: bold 9px/14px "Liberation Mono", monospace; }
    .files .file .glyph { width: 13px; height: 13px; }
    .files .file button { margin-left: auto; }
    .files .add { width: 24px; background: #343b47; }
    .view { flex: 1; min-height: 0; position: relative; background: #21272f; overflow: hidden; }
    .scene { position: absolute; inset: 0; width: 100%; height: 100%; }
    .over { position: absolute; top: 0; left: 4px; right: 4px; display: flex; justify-content: space-between; align-items: center; }
    .vlabel { font: 9px/13px "Liberation Mono", "Noto Sans CJK SC", monospace; color: #c0c5cc; }
    .vlabel .half { font-size: 8px; }
    .winbtns { display: flex; gap: 3px; padding-top: 2px; }
    .layouts { display: flex; height: 13px; flex: none; gap: 1px; padding-top: 1px; font-size: 10px; line-height: 12px; color: #cdd2d9; }
    .layouts button { background: #363e4b; height: 12px; width: 12px; }
    .layouts .lt { width: 45px; background: #3a414d; }
    .layouts .lt.sel { width: 40px; background: #4b5c78; color: #fff; font-weight: bold; }
    .layouts .more { width: 25px; }

    .cmd { height: 117px; flex: none; display: flex; padding-top: 2px; border-top: 1px solid #343c47; }
    .cmd .edge { width: 15px; background: #434b59; align-items: flex-start; padding-top: 3px; }
    .cmd .body { flex: 1; min-width: 0; display: flex; flex-direction: column; background: #2c2e32; color: #a5aab1; }
    .cmd .hist { flex: 1; min-height: 0; display: flex; justify-content: space-between; border-bottom: 1px solid #454a4e; }
    .cmd ol { list-style: none; margin: 0; padding: 0; display: grid; grid-auto-rows: minmax(0, 1fr); height: 97px; }
    .cmd li, .prompt { font: 12px/12px "Liberation Mono", "Noto Sans CJK SC", monospace; white-space: pre; padding-left: 1px; }
    .cmd li .half, .prompt .half, .prompt input { font-size: 10px; line-height: 10px; }
    .scroll { width: 8px; background: #3a3f45; display: flex; flex-direction: column; align-items: center; justify-content: space-between; padding: 6px 0 5px; margin-right: 1px; }
    .scroll .thumb { width: 6px; height: 7px; background: #5c6572; margin-top: auto; margin-bottom: 3px; }
    .prompt { display: flex; align-items: center; height: 16px; flex: none; }
    .prompt input { flex: 1; outline: none; margin-left: 6px; border-left: 1px solid #a5aab1; height: 12px; }

    .props { width: 169px; flex: none; display: flex; flex-direction: column; margin: 2px 0 1px; background: #434c58; font-size: 9px; border-right: 2px solid #38404b; }
    .props h2 { display: flex; align-items: center; justify-content: space-between; height: 15px; margin: 0; padding: 0 3px 0 6px; background: #4b5664; font-size: 11px; }
    .pick { display: flex; align-items: center; height: 17px; margin: 2px 2px 2px 4px; gap: 1px; }
    .pick label { display: flex; align-items: center; flex: 1; border: 1px solid #4d5663; padding: 0 2px 0 0; height: 16px; }
    .pick .glyph { width: 14px; height: 14px; }
    section { margin: 0 10px 2px 4px; }
    section h3 { display: flex; align-items: center; justify-content: space-between; height: 19px; margin: 0; padding: 0 5px 0 1px; background: #383c43; font-size: 10px; }
    table { width: 146px; margin-left: 7px; border-collapse: collapse; table-layout: fixed; }
    tr { height: 18px; }
    tr:nth-child(3n) { height: 19px; }
    th, td { padding: 0 0 0 2px; border: 1px solid #4e5865; text-align: left; font-weight: normal; line-height: 12px; white-space: nowrap; overflow: hidden; }
    th { width: 47px; }
    td { padding-left: 1px; }
    td.dim { color: #8d949e; }
    .cell { display: flex; align-items: center; gap: 2px; }
    .cell .swatch { width: 7px; height: 7px; margin: 0; }
    .cell .rule { margin: 0; }

    .status { display: flex; align-items: center; height: 16px; flex: none; background: #303742; padding-left: 4px; }
    .coords { font: 8px/14px "Liberation Mono", monospace; width: 191px; white-space: pre; flex: none; }
    .status .group .ib { height: 15px; width: 15px; }
    .status .ib.on { background: #466683; border: 1px solid #5b9bd0; }
    .status .unit { color: #8c939d; margin: 0 4px 0 1px; font-size: 9px; }
    .status .ratio { color: #8c939d; margin-right: 5px; font-family: "Liberation Mono", monospace; font-size: 8px; }
    .status .caret { margin-right: 3px; }
    .tail { padding-right: 11px; display: flex; }
  `;

  private closeMark(size: number, color: string) {
    return html`<svg width=${size} height=${size} viewBox="0 0 8 8" aria-hidden="true">
      <path d="M0.500 0.500l7 7M7.500 0.500l-7 7" stroke=${color} fill="none" /></svg>`;
  }

  private treeHead(name: string, open = false) {
    return html`<button class="head" type="button">
      <svg viewBox="0 0 9 9" aria-hidden="true">
        <circle cx="4.500" cy="4.500" r="3.700" fill="#fafafa" stroke="#cfcfcf" stroke-width=".7" />
        <path d=${open ? "M2.800 3.500h3.400L4.500 5.700z" : "M3.700 2.800l2 1.700-2 1.700z"} fill="#222" />
      </svg>${name}</button>`;
  }

  private scene() {
    return svg`<svg class="scene" role="img" aria-label="Drawing1.dwg">
      <g transform="translate(-139 -88)" fill="none" stroke="#b4b8bd">
        <path d="M548 121.500A241.500 139 0 1 1 313 286" />
        <ellipse cx="550.500" cy="262" rx="86.500" ry="48" />
        <ellipse cx="359" cy="310.500" rx="30" ry="17.500" />
        <path d="M200 414.500V370M197 379l3-9 3 9M200 414.500L161 437M200 414.500L239 437M229.500 434.500L239 437l-6.500-7" />
        ${POINTS.map(([x, y]) => svg`<rect x=${x} y=${y} width="1" height="1" fill="#7d838b" stroke="none" />`)}
        <path d="M624 287L680 319" stroke="#8e2c34" />
        <path d="M601 319L658 287" stroke="#262f94" />
        <path d="M640.500 251V316" stroke="#1f9330" />
        <rect x="638" y="293.500" width="5" height="5" fill="#21272f" stroke="#c8ccd0" />
        <g fill="#a9aeb5" stroke="none" font-family="Open Sans" font-weight="300" font-size="15" text-anchor="middle">
          <text x="200" y="363">Y</text><text x="151" y="448">Z</text><text x="249" y="448">X</text>
        </g>
      </g>
    </svg>`;
  }

  render() {
    return html`
      <header class="title">
        <svg width="13" height="13" viewBox="0 0 13 13" aria-hidden="true">
          <rect width="13" height="13" rx="1" fill="#1f7fd6" />
          <path d="M1.500 4h4l-3 5h3l2-3.500 1 3.500 2-5" fill="none" stroke="#fff" stroke-width="1.300" />
        </svg>
        <h1>ZWCAD 2024 试用版 (功能受限) - [Drawing1.dwg]</h1>
        <button class="wb" type="button" aria-label="最小化"><svg width="8" height="8"><path d="M0 4.500h8" stroke="#555" /></svg></button>
        <button class="wb" type="button" aria-label="最大化"><svg width="8" height="8"><rect x=".5" y=".5" width="7" height="7" rx="1" fill="none" stroke="#222" /></svg></button>
        <button class="wb" type="button" aria-label="关闭">${this.closeMark(9, "#222")}</button>
      </header>
      <nav class="menu">${MENUS.map((m) => html`<button type="button">${m}</button>`)}</nav>

      <div class="bar bar1">
        <div class="run">
          ${group(["newf", "open", "save", "saveas", "saveall"])}${sep}
          ${group(["print", "preview", "plot"])}${sep}
          ${group(["cut", "copy", "paste", "match", "brush"])}${sep}
          <div class="history">${iconBtn("undo")}${caret}${iconBtn("redo")}${caret}</div>
          ${group(["hand", "zoomrt", "zoomw", "zoomp"])}${sep}
          ${group(["calc", "sheet", "pal", "cloud"])}${sep}
          ${group(["help"])}${grip}
          ${iconBtn("txt")}${combo("style", "文字样式", "Standard")}${grip}
          ${iconBtn("dim")}${combo("style", "标注样式", "ISO-25")}${grip}
          ${iconBtn("tbl")}${combo("style", "表格样式", "Standard")}${grip}
          ${iconBtn("mld")}${combo("style", "引线样式", "Standard")}
        </div>
      </div>
      <div class="bar bar2">
        <div class="run">
          ${iconBtn("layers")}
          ${combo("layer", "图层", "0", html`${["bulb", "sun", "vp", "lock"].map(glyph)}<span class="swatch"></span>`)}
          ${group(["lay1", "lay2", "lay3"])}${sep}${grip}
          ${combo("color", "颜色", "随层", html`<span class="swatch"></span>`)}${grip}
          ${combo("ltype", "线型", "随层", html`<span class="rule" style="width:32px"></span>`)}${grip}
          ${combo("lweight", "线宽", "随层", html`<span class="rule" style="width:20px"></span>`)}${grip}
          ${combo("pstyle", "打印样式", "随色")}${grip}
          ${group(["gear", "grid", "g1", "g2"])}${sep}
          ${group(["a1", "a2", "a3", "a4", "a5", "a6", "a7"])}${sep}
          ${group(["t1", "t2", "t3", "t4"])}${sep}
          ${group(["c1", "c2", "c3", "c4", "c5", "c6"])}${sep}
          ${group(["d1", "d2", "d3"])}${sep}
          ${group(["e1", "e2"])}
        </div>
      </div>

      <div class="main">
        <aside class="catalog">
          <div class="list">
            ${TREE.map((t, i) => this.treeHead(t, i === TREE.length - 1))}
            ${LEAVES.map(([i, t]) => html`<button class="leaf" type="button">${glyph(i)}${t}</button>`)}
          </div>
          <div class="list foot">${["造林工具", "关于景园"].map((t) => this.treeHead(t))}</div>
        </aside>

        <div class="center">
          <div class="work">
            <div class="side draw"><div class="pad"><div class="stack">${DRAW.map((n) => iconBtn(n))}</div></div></div>
            <div class="doc">
              <div class="files">
                <button class="drop" type="button" aria-label="文件列表">${caret}</button>
                <div class="file">
                  <svg class="glyph" viewBox="0 0 16 16" aria-hidden="true">
                    <path d="M4 1h6l3 3v10H3z" fill="#cfe3f8" /><rect x="1" y="6" width="14" height="7" rx="3" fill="#2f7fe0" />
                    <path d="M4 8v3q2 0 2-1.500T4 8M7.500 8l.7 3 .8-2 .8 2 .7-3M13.500 8.500q-1.500-1-2 1t2 1v-1" fill="none" stroke="#fff" stroke-width=".8" />
                  </svg>
                  <span>Drawing1.dwg*</span>
                  <button type="button" aria-label="关闭">${this.closeMark(7, "#fff")}</button>
                </div>
                <button class="add" type="button" aria-label="新建">${glyph("newf")}</button>
              </div>
              <div class="view">
                ${this.scene()}
                <div class="over">
                  <span class="vlabel">${grid2("[-][西南等轴测][二维线框][未命名 UCS]")}</span>
                  <span class="winbtns">
                    <button type="button" aria-label="最小化"><svg width="8" height="7"><path d="M1 5.500h5" stroke="#eee" stroke-width="1.500" /></svg></button>
                    <button type="button" aria-label="还原"><svg width="8" height="7"><path d="M1.500 3h3.500v3H1.500zM3 3V1h3.500v3.500H5" fill="none" stroke="#eee" /></svg></button>
                    <button type="button" aria-label="关闭"><svg width="8" height="7"><path d="M2 1.500l4 4M6 1.500l-4 4" stroke="#eee" stroke-width="1.200" /></svg></button>
                  </span>
                </div>
              </div>
              <div class="layouts">
                <button type="button" aria-label="展开"><svg width="8" height="5"><path d="M0 5l4-4 4 4z" fill="#fff" /></svg></button>
                ${["M1 0v6M6 0v6L2 3z", "M5 0v6L1 3z", "M2 0v6l4-3z", "M6 0v6M1 0v6l4-3z"].map((d) => html`
                  <button type="button" aria-label="翻页"><svg width="7" height="6"><path d=${d} fill="#aab1bc" stroke="#aab1bc" stroke-width=".5" /></svg></button>`)}
                ${["模型", "布局1", "布局2"].map((t) => html`
                  <button type="button" class=${classMap({ lt: true, sel: t === this.layout })}
                    @click=${() => (this.layout = t)}>${t}</button>`)}
                <button class="more" type="button">+</button>
              </div>
            </div>
            <div class="side mod">
              <div class="pad"><div class="stack">${MODIFY.map((n) => iconBtn(n))}</div></div>
              <div class="pad"><div class="stack order">${ORDER.map((n) => iconBtn(n))}</div>${iconBtn("bot")}</div>
            </div>
          </div>

          <div class="cmd">
            <button class="edge" type="button" aria-label="关闭">${this.closeMark(7, "#6e7786")}</button>
            <div class="body">
              <div class="hist">
                <ol>${HISTORY.map((l) => html`<li>${grid2(l)}</li>`)}</ol>
                <div class="scroll">
                  <svg width="6" height="4"><path d="M0 4l3-3 3 3" fill="none" stroke="#7d848e" /></svg>
                  <span class="thumb"></span>
                  <svg width="6" height="4"><path d="M0 0l3 3 3-3" fill="none" stroke="#7d848e" /></svg>
                </div>
              </div>
              <div class="prompt">
                <label for="line">${grid2("命令:")}</label><input id="line" type="text" autocomplete="off" />
              </div>
            </div>
          </div>
        </div>

        <aside class="props">
          <h2>特性 <button type="button" aria-label="关闭">${this.closeMark(8, "#e6e9ee")}</button></h2>
          <div class="pick">
            <label><select aria-label="选择"><option>无选择</option></select>${caret}</label>
            ${["pk1", "pk2", "pk3"].map((n) => iconBtn(n))}
          </div>
          ${SECTIONS.map((s) => html`
            <section>
              <h3>${s.title}${caret}</h3>
              <table>
                ${s.rows.map((r) => html`<tr>
                  <th scope="row">${r.k}</th>
                  <td class=${classMap({ dim: !!r.dim })}><div class="cell">
                    ${r.swatch ? html`<span class="swatch"></span>` : nothing}
                    ${r.rule ? html`<span class="rule" style="width:${r.rule}px"></span>` : nothing}
                    <span>${r.v}</span></div></td>
                </tr>`)}
              </table>
            </section>`)}
        </aside>
      </div>

      <footer class="status">
        <span class="coords">84.4814, 441.6716, 0.0000</span>
        <div class="group" style="width:${Math.round(14 * STEP)}px">
          ${Array.from({ length: 14 }, (_, i) => iconBtn(`s${i + 1}`, [4, 5, 6, 8, 10, 14].includes(i + 1)))}
        </div>
        <span class="grow"></span>
        ${glyph("units")}<span class="unit">毫米</span>${caret}
        ${glyph("ann")}<span class="ratio">1:1</span>${caret}
        <div class="tail">${["ann2", "ann3", "iso", "cog", "chip", "full", "menu"].map((n) => iconBtn(n))}</div>
      </footer>
    `;
  }
}
